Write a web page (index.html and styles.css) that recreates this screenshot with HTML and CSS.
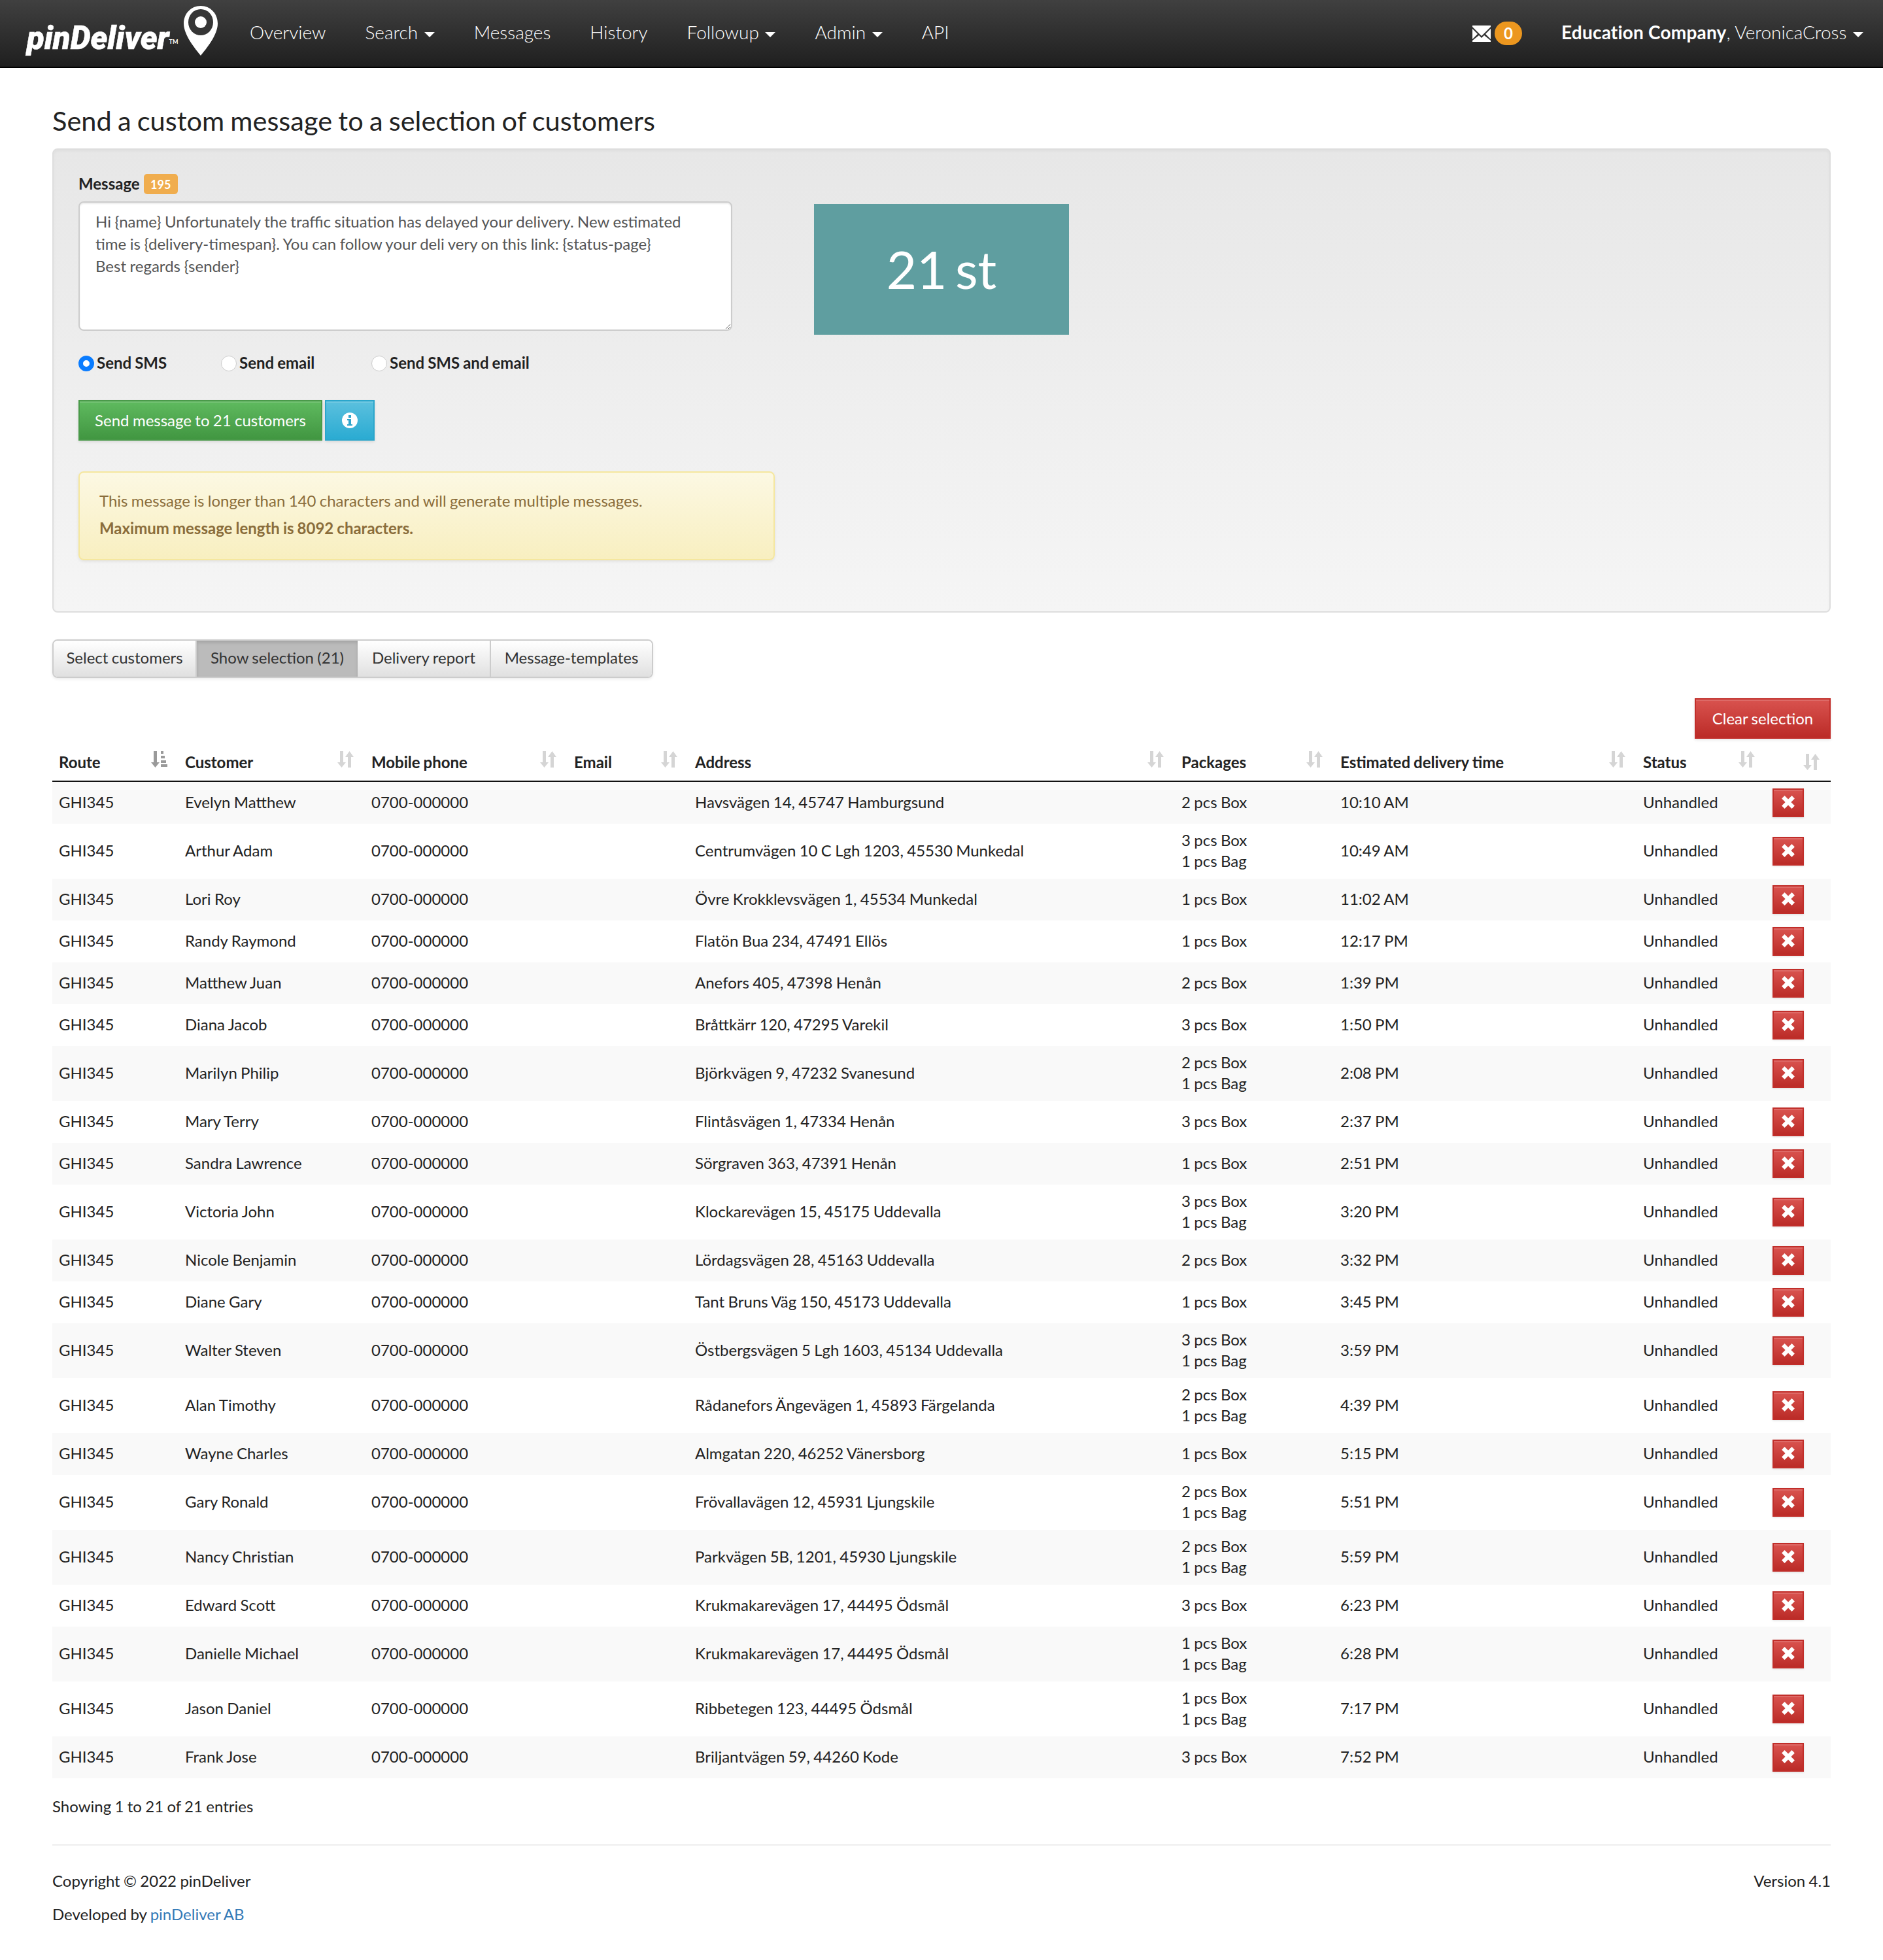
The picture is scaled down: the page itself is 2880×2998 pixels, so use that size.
FILE: index.html
```html
<!DOCTYPE html>
<html lang="en">
<head>
<meta charset="utf-8">
<title>pinDeliver</title>
<link rel="stylesheet" href="styles.css">
</head>
<body>
<svg class="defs" width="0" height="0" aria-hidden="true">
  <symbol id="sort" viewBox="0 0 25 25"><path d="M4 0h5v17h4l-6.500 8L0 17h4zM16 25V9h-4l6.500-9L25 9h-4v16z"/></symbol>
  <symbol id="sorted" viewBox="0 0 25 25"><path d="M4 0h5v17h4l-6.500 8L0 17h4zM15 0h4v4h-4zM15 7h6v4h-6zM15 14h8v4h-8zM15 20h10v4H15z"/></symbol>
  <symbol id="x" viewBox="0 0 20 20"><path d="M5 1l5 5 5-5 4 4-5 5 5 5-4 4-5-5-5 5-4-4 5-5-5-5z"/></symbol>
</svg>
<header class="nav">
  <a class="logo"><span class="logo-text">pinDeliver<sup class="tm">TM</sup></span>
    <svg class="pin" viewBox="0 0 52 76"><path fill="#fff" d="M26 0C11 0 0 12 0 27c0 18 18 39 26 49 8-10 26-31 26-49C52 12 41 0 26 0z"/><ellipse cx="26" cy="25" rx="19" ry="20" fill="#363636"/><circle cx="26" cy="25" r="9" fill="#fff"/></svg>
  </a>
  <a class="nav-item">Overview</a>
  <a class="nav-item">Search <i class="caret"></i></a>
  <a class="nav-item">Messages</a>
  <a class="nav-item">History</a>
  <a class="nav-item">Followup <i class="caret"></i></a>
  <a class="nav-item">Admin <i class="caret"></i></a>
  <a class="nav-item">API</a>
  <div class="nav-right">
    <svg class="env" viewBox="0 0 28 25"><path fill="#fff" d="M0 0h28v2L14 16 0 2zM0 5l8 8-8 8zM28 5v16l-8-8zM10 15l4 4 4-4 10 8v2H0v-2z"/></svg>
    <span class="count">0</span>
    <a class="user"><b>Education Company</b>, VeronicaCross <i class="caret"></i></a>
  </div>
</header>
<main class="page">
  <h1 class="title">Send a custom message to a selection of customers</h1>
  <section class="panel">
    <div class="form">
      <div class="label-row"><label class="lbl">Message</label><span class="tag">195</span></div>
      <textarea class="msg">Hi {name} Unfortunately the traffic situation has delayed your delivery. New estimated time is {delivery-timespan}. You can follow your deli very on this link: {status-page}
Best regards {sender}</textarea>
      <div class="radios">
        <label class="radio r1"><input type="radio" name="m" checked>Send SMS</label>
        <label class="radio r2"><input type="radio" name="m">Send email</label>
        <label class="radio"><input type="radio" name="m">Send SMS and email</label>
      </div>
      <div class="actions">
        <button class="btn green">Send message to 21 customers</button>
        <button class="btn blue"><svg class="info" viewBox="0 0 24 24"><circle cx="12" cy="12" r="12" fill="#fff"/><path fill="#31a5cc" d="M10 4h4v4h-4zM8 10h6v8h2v2H8v-2h2v-6H8z"/></svg></button>
      </div>
      <div class="alert">
        <p>This message is longer than 140 characters and will generate multiple messages.</p>
        <p><b>Maximum message length is 8092 characters.</b></p>
      </div>
    </div>
    <div class="bigcount">21 st</div>
  </section>
  <nav class="tabs">
    <a class="tab">Select customers</a>
    <a class="tab on">Show selection (21)</a>
    <a class="tab">Delivery report</a>
    <a class="tab">Message-templates</a>
  </nav>
  <div class="clear-row"><button class="btn red">Clear selection</button></div>
  <table class="grid">
    <colgroup><col class="c1"><col class="c2"><col class="c3"><col class="c4"><col class="c5"><col class="c6"><col class="c7"><col class="c8"><col class="c9"></colgroup>
    <thead><tr>
      <th><div class="th"><span>Route</span><svg class="si on"><use href="#sorted"/></svg></div></th>
      <th><div class="th"><span>Customer</span><svg class="si"><use href="#sort"/></svg></div></th>
      <th><div class="th"><span>Mobile phone</span><svg class="si"><use href="#sort"/></svg></div></th>
      <th><div class="th"><span>Email</span><svg class="si"><use href="#sort"/></svg></div></th>
      <th><div class="th"><span>Address</span><svg class="si"><use href="#sort"/></svg></div></th>
      <th><div class="th"><span>Packages</span><svg class="si"><use href="#sort"/></svg></div></th>
      <th><div class="th"><span>Estimated delivery time</span><svg class="si"><use href="#sort"/></svg></div></th>
      <th><div class="th"><span>Status</span><svg class="si"><use href="#sort"/></svg></div></th>
      <th><div class="th"><span></span><svg class="si"><use href="#sort"/></svg></div></th>
    </tr></thead>
    <tbody>
      <tr><td>GHI345</td><td>Evelyn Matthew</td><td>0700-000000</td><td></td><td>Havsvägen 14, 45747 Hamburgsund</td><td>2 pcs Box</td><td>10:10 AM</td><td>Unhandled</td><td><button class="del"><svg><use href="#x"/></svg></button></td></tr>
      <tr><td>GHI345</td><td>Arthur Adam</td><td>0700-000000</td><td></td><td>Centrumvägen 10 C Lgh 1203, 45530 Munkedal</td><td>3 pcs Box<br>1 pcs Bag</td><td>10:49 AM</td><td>Unhandled</td><td><button class="del"><svg><use href="#x"/></svg></button></td></tr>
      <tr><td>GHI345</td><td>Lori Roy</td><td>0700-000000</td><td></td><td>Övre Krokklevsvägen 1, 45534 Munkedal</td><td>1 pcs Box</td><td>11:02 AM</td><td>Unhandled</td><td><button class="del"><svg><use href="#x"/></svg></button></td></tr>
      <tr><td>GHI345</td><td>Randy Raymond</td><td>0700-000000</td><td></td><td>Flatön Bua 234, 47491 Ellös</td><td>1 pcs Box</td><td>12:17 PM</td><td>Unhandled</td><td><button class="del"><svg><use href="#x"/></svg></button></td></tr>
      <tr><td>GHI345</td><td>Matthew Juan</td><td>0700-000000</td><td></td><td>Anefors 405, 47398 Henån</td><td>2 pcs Box</td><td>1:39 PM</td><td>Unhandled</td><td><button class="del"><svg><use href="#x"/></svg></button></td></tr>
      <tr><td>GHI345</td><td>Diana Jacob</td><td>0700-000000</td><td></td><td>Bråttkärr 120, 47295 Varekil</td><td>3 pcs Box</td><td>1:50 PM</td><td>Unhandled</td><td><button class="del"><svg><use href="#x"/></svg></button></td></tr>
      <tr><td>GHI345</td><td>Marilyn Philip</td><td>0700-000000</td><td></td><td>Björkvägen 9, 47232 Svanesund</td><td>2 pcs Box<br>1 pcs Bag</td><td>2:08 PM</td><td>Unhandled</td><td><button class="del"><svg><use href="#x"/></svg></button></td></tr>
      <tr><td>GHI345</td><td>Mary Terry</td><td>0700-000000</td><td></td><td>Flintåsvägen 1, 47334 Henån</td><td>3 pcs Box</td><td>2:37 PM</td><td>Unhandled</td><td><button class="del"><svg><use href="#x"/></svg></button></td></tr>
      <tr><td>GHI345</td><td>Sandra Lawrence</td><td>0700-000000</td><td></td><td>Sörgraven 363, 47391 Henån</td><td>1 pcs Box</td><td>2:51 PM</td><td>Unhandled</td><td><button class="del"><svg><use href="#x"/></svg></button></td></tr>
      <tr><td>GHI345</td><td>Victoria John</td><td>0700-000000</td><td></td><td>Klockarevägen 15, 45175 Uddevalla</td><td>3 pcs Box<br>1 pcs Bag</td><td>3:20 PM</td><td>Unhandled</td><td><button class="del"><svg><use href="#x"/></svg></button></td></tr>
      <tr><td>GHI345</td><td>Nicole Benjamin</td><td>0700-000000</td><td></td><td>Lördagsvägen 28, 45163 Uddevalla</td><td>2 pcs Box</td><td>3:32 PM</td><td>Unhandled</td><td><button class="del"><svg><use href="#x"/></svg></button></td></tr>
      <tr><td>GHI345</td><td>Diane Gary</td><td>0700-000000</td><td></td><td>Tant Bruns Väg 150, 45173 Uddevalla</td><td>1 pcs Box</td><td>3:45 PM</td><td>Unhandled</td><td><button class="del"><svg><use href="#x"/></svg></button></td></tr>
      <tr><td>GHI345</td><td>Walter Steven</td><td>0700-000000</td><td></td><td>Östbergsvägen 5 Lgh 1603, 45134 Uddevalla</td><td>3 pcs Box<br>1 pcs Bag</td><td>3:59 PM</td><td>Unhandled</td><td><button class="del"><svg><use href="#x"/></svg></button></td></tr>
      <tr><td>GHI345</td><td>Alan Timothy</td><td>0700-000000</td><td></td><td>Rådanefors Ängevägen 1, 45893 Färgelanda</td><td>2 pcs Box<br>1 pcs Bag</td><td>4:39 PM</td><td>Unhandled</td><td><button class="del"><svg><use href="#x"/></svg></button></td></tr>
      <tr><td>GHI345</td><td>Wayne Charles</td><td>0700-000000</td><td></td><td>Almgatan 220, 46252 Vänersborg</td><td>1 pcs Box</td><td>5:15 PM</td><td>Unhandled</td><td><button class="del"><svg><use href="#x"/></svg></button></td></tr>
      <tr><td>GHI345</td><td>Gary Ronald</td><td>0700-000000</td><td></td><td>Frövallavägen 12, 45931 Ljungskile</td><td>2 pcs Box<br>1 pcs Bag</td><td>5:51 PM</td><td>Unhandled</td><td><button class="del"><svg><use href="#x"/></svg></button></td></tr>
      <tr><td>GHI345</td><td>Nancy Christian</td><td>0700-000000</td><td></td><td>Parkvägen 5B, 1201, 45930 Ljungskile</td><td>2 pcs Box<br>1 pcs Bag</td><td>5:59 PM</td><td>Unhandled</td><td><button class="del"><svg><use href="#x"/></svg></button></td></tr>
      <tr><td>GHI345</td><td>Edward Scott</td><td>0700-000000</td><td></td><td>Krukmakarevägen 17, 44495 Ödsmål</td><td>3 pcs Box</td><td>6:23 PM</td><td>Unhandled</td><td><button class="del"><svg><use href="#x"/></svg></button></td></tr>
      <tr><td>GHI345</td><td>Danielle Michael</td><td>0700-000000</td><td></td><td>Krukmakarevägen 17, 44495 Ödsmål</td><td>1 pcs Box<br>1 pcs Bag</td><td>6:28 PM</td><td>Unhandled</td><td><button class="del"><svg><use href="#x"/></svg></button></td></tr>
      <tr><td>GHI345</td><td>Jason Daniel</td><td>0700-000000</td><td></td><td>Ribbetegen 123, 44495 Ödsmål</td><td>1 pcs Box<br>1 pcs Bag</td><td>7:17 PM</td><td>Unhandled</td><td><button class="del"><svg><use href="#x"/></svg></button></td></tr>
      <tr><td>GHI345</td><td>Frank Jose</td><td>0700-000000</td><td></td><td>Briljantvägen 59, 44260 Kode</td><td>3 pcs Box</td><td>7:52 PM</td><td>Unhandled</td><td><button class="del"><svg><use href="#x"/></svg></button></td></tr>
    </tbody>
  </table>
  <p class="showing">Showing 1 to 21 of 21 entries</p>
  <footer class="foot">
    <div>
      <p class="copy">Copyright © 2022 pinDeliver</p>
      <p class="dev">Developed by <a class="link">pinDeliver AB</a></p>
    </div>
    <p class="copy">Version 4.1</p>
  </footer>
</main>
</body>
</html>
```
FILE: styles.css
```css
* { box-sizing: border-box; }
html, body { margin: 0; padding: 0; }
body { font: 400 24px/32px Lato, "Liberation Sans", sans-serif; word-spacing: -.8px; color: #222; background: #fff; }
p { margin: 0; }
.defs { position: absolute; }

.nav { height: 104px; display: flex; align-items: center; color: #fff; word-spacing: 0; background: linear-gradient(#404040, #1f1f1f); border-bottom: 2px solid #000; padding: 0 30px 0 41px; }
.logo { display: flex; align-items: flex-start; width: 341px; height: 104px; }
.logo-text { font: italic 900 49px/60px Roboto, sans-serif; -webkit-text-stroke: .5px #fff; margin-top: 30px; width: 240px; white-space: nowrap; }
.tm { font: 700 9px/9px Lato, sans-serif; -webkit-text-stroke: 0; vertical-align: 8px; }
.pin { width: 52px; height: 76px; margin-top: 10px; }
.nav-item { font-weight: 300; font-size: 28px; line-height: 36px; margin-right: 60px; white-space: nowrap; margin-top: -4px; }
.caret { display: inline-block; width: 0; height: 0; margin-left: 2px; vertical-align: middle; border-top: 8px solid #fff; border-left: 8px solid transparent; border-right: 8px solid transparent; }
.nav-right { margin-left: auto; display: flex; align-items: center; }
.env { width: 28px; height: 25px; margin-right: 6px; }
.count { width: 42px; height: 36px; border-radius: 18px; background: #ec971f; font-weight: 700; font-size: 24px; line-height: 36px; text-align: center; margin-right: 60px; }
.user { font-weight: 300; font-size: 28px; line-height: 36px; white-space: nowrap; margin-top: -4px; }
.user b { font-weight: 700; letter-spacing: .2px; }

.page { padding: 0 80px; }
.title { font-weight: 400; font-size: 41.5px; word-spacing: -1.4px; line-height: 48px; margin: 56px 0 19px; color: #222; }

.panel { display: flex; height: 710px; padding: 36px 38px 0; border: 2px solid #dedede; border-radius: 8px; background: linear-gradient(#e7e7e7, #f5f5f5); box-shadow: inset 0 2px 4px rgba(0,0,0,.04); }
.form { width: 1065px; }
.label-row { display: flex; align-items: center; height: 32px; }
.lbl { font-weight: 700; }
.tag { margin-left: 6px; width: 52px; height: 31px; border-radius: 5px; background: #f0ad4e; color: #fff; font-weight: 700; font-size: 18px; line-height: 32px; text-align: center; }
.msg { display: block; width: 1000px; height: 198px; margin-top: 11px; padding: 12px 24px; border: 2px solid #ccc; border-radius: 8px; background: #fff; font: 400 24px/34px Lato, sans-serif; word-spacing: -.6px; color: #555; box-shadow: inset 0 2px 2px rgba(0,0,0,.075); outline: 0; }
.radios { display: flex; height: 32px; margin-top: 34px; }
.radio { display: flex; align-items: center; font-weight: 700; padding-bottom: 2px; }
.r1 { width: 218px; }
.r2 { width: 230px; }
.radio input { appearance: none; width: 24px; height: 24px; margin: 2px 4px 0 0; border-radius: 50%; background: #fff; border: 1px solid #ccc; }
.radio input:checked { border: 7px solid #0a7cff; }
.actions { display: flex; gap: 4px; margin-top: 40px; }
.btn { height: 62px; font: 400 24px/32px Lato, sans-serif; word-spacing: -.8px; color: #fff; border-width: 2px; border-style: solid; border-radius: 0; padding: 0; white-space: nowrap; box-shadow: inset 0 2px 0 rgba(255,255,255,.14), 0 2px 4px rgba(0,0,0,.1); }
.green { width: 373px; background: linear-gradient(#5fba5f, #419641); border-color: #4a9a4a; }
.blue { width: 76px; background: linear-gradient(#5bc0de, #2aabd2); border-color: #2ba6cb; display: flex; align-items: center; justify-content: center; }
.info { width: 24px; height: 24px; }
.red { width: 208px; background: linear-gradient(#d9534f, #bb2b27); border-color: #c12e2a; }
.alert { height: 136px; margin-top: 47px; padding: 22px 30px; border: 2px solid #f5e79e; border-radius: 8px; background: linear-gradient(#fcf8e3, #f8efc0); color: #8a6d3b; line-height: 42px; box-shadow: 0 2px 4px rgba(0,0,0,.08); }
.alert b { font-weight: 700; }
.bigcount { width: 390px; height: 200px; margin: 47px 0 0 60px; background: #5f9ea0; color: #fff; font: 400 80px/198px Lato, sans-serif; word-spacing: -8px; text-align: center; }

.tabs { display: grid; grid-template-columns: 219px 246px 204px 1fr; width: 919px; height: 59px; margin-top: 41px; border: 2px solid #ccc; border-radius: 8px; box-shadow: 0 2px 4px rgba(0,0,0,.08); overflow: hidden; }
.tab { line-height: 52px; text-align: center; color: #333; background: linear-gradient(#fff, #e0e0e0); border-right: 2px solid #ccc; white-space: nowrap; }
.tab:last-child { border-right: 0; }
.tab.on { background: #bbb; border-right: 0; box-shadow: inset 0 3px 5px rgba(0,0,0,.125); }

.clear-row { display: flex; justify-content: flex-end; margin-top: 31px; }

.grid { width: 100%; table-layout: fixed; border-collapse: collapse; margin-top: 12px; }
.c1 { width: 193px; } .c2 { width: 285px; } .c3 { width: 310px; } .c4 { width: 185px; } .c5 { width: 744px; } .c6 { width: 243px; } .c7 { width: 463px; } .c8 { width: 198px; } .c9 { width: 99px; }
.grid th { padding: 8px 10px 12px; text-align: left; font-weight: 700; border-bottom: 2px solid #111; }
.th { display: flex; justify-content: space-between; }
.si { width: 25px; height: 25px; margin: -1px 7px 0 0; fill: #d5d5d5; flex: none; }
.si.on { fill: #9a9a9a; }
.grid td { padding: 9px 10px 11px; vertical-align: middle; }
.grid td:last-child { padding: 10px; }
.grid tbody tr:nth-child(odd) { background: #f9f9f9; }
.del { display: block; width: 48px; height: 44px; padding: 0; border: 2px solid #c12e2a; background: linear-gradient(#d9534f, #bb2b27); box-shadow: inset 0 2px 0 rgba(255,255,255,.14), 0 1px 3px rgba(0,0,0,.12); }
.del svg { display: block; width: 22px; height: 22px; margin: -2px auto 0; fill: #fff; }

.showing { margin-top: 27px; }
.foot { display: flex; justify-content: space-between; margin-top: 42px; padding-top: 38px; border-top: 2px solid #eee; height: 178px; }
.dev { margin-top: 19px; }
.link { color: #337ab7; }
```
